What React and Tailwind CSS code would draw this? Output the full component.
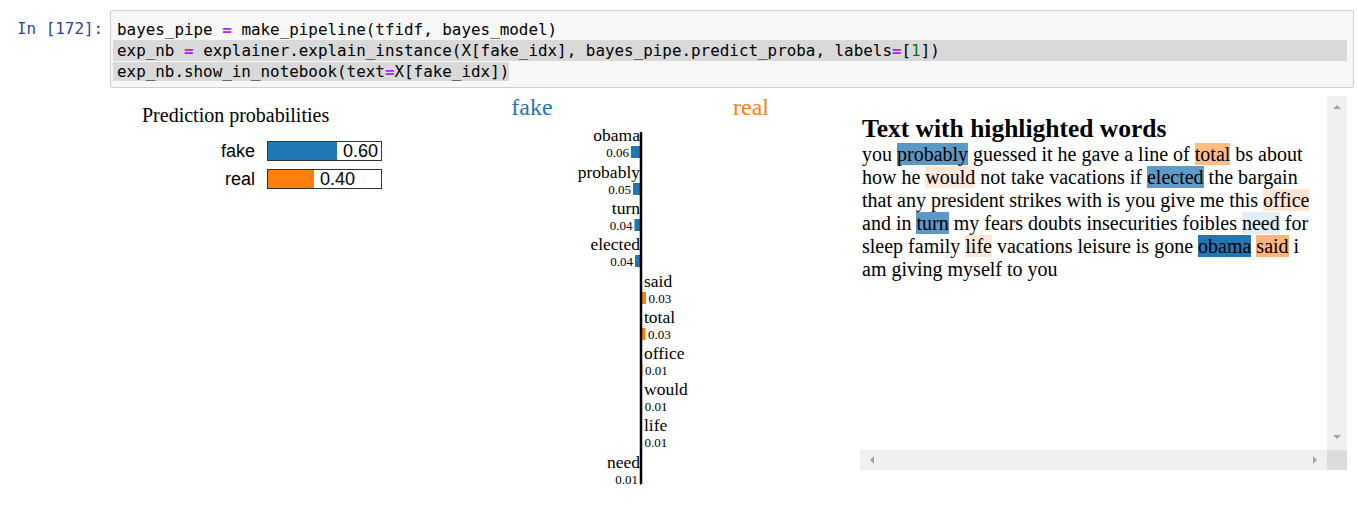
import React from 'react';

const mono = "font-['DejaVu_Sans_Mono','Liberation_Mono',monospace]";

function Op({ children }) {
  return <span className="text-[#aa22ff] font-bold">{children}</span>;
}

function Num({ children }) {
  return <span className="text-[#008000]">{children}</span>;
}

const features = [
  { name: 'obama', value: '0.06', w: 10, side: 'fake', y: 47 },
  { name: 'probably', value: '0.05', w: 8, side: 'fake', y: 84 },
  { name: 'turn', value: '0.04', w: 6.5, side: 'fake', y: 120 },
  { name: 'elected', value: '0.04', w: 6, side: 'fake', y: 156 },
  { name: 'said', value: '0.03', w: 5, side: 'real', y: 193 },
  { name: 'total', value: '0.03', w: 4.5, side: 'real', y: 229 },
  { name: 'office', value: '0.01', w: 1.5, side: 'real', y: 265 },
  { name: 'would', value: '0.01', w: 1.2, side: 'real', y: 301 },
  { name: 'life', value: '0.01', w: 1, side: 'real', y: 337 },
  { name: 'need', value: '0.01', w: 1, side: 'fake', y: 374 },
];

const words = [
  ['you'], ['probably', '#5c98c6'], ['guessed'], ['it'], ['he'], ['gave'], ['a'], ['line'], ['of'],
  ['total', '#ffbc83'], ['bs'], ['about'], ['how'], ['he'], ['would', '#fde7d8'], ['not'], ['take'],
  ['vacations'], ['if'], ['elected', '#5f9bc7'], ['the'], ['bargain'], ['that'], ['any'], ['president'],
  ['strikes'], ['with'], ['is'], ['you'], ['give'], ['me'], ['this'], ['office', '#fee6d6'], ['and'],
  ['in'], ['turn', '#5c98c6'], ['my'], ['fears'], ['doubts'], ['insecurities'], ['foibles'],
  ['need', '#e3edf5'], ['for'], ['sleep'], ['family'], ['life', '#fde7d8'], ['vacations'], ['leisure'],
  ['is'], ['gone'], ['obama', '#2177b4'], ['said', '#ffb57a'], ['i'], ['am'], ['giving'], ['myself'],
  ['to'], ['you'],
];

function ProbaChart() {
  return (
    <svg width="370" height="120" className="font-['Liberation_Serif',serif] mt-[8px]">
      <text x="32" y="26" fontSize="20" fill="#000">Prediction probabilities</text>
      <g fontFamily="'Liberation Sans', Arial, sans-serif" fontSize="18" fill="#000">
        <text x="145" y="61" textAnchor="end">fake</text>
        <rect x="157.5" y="45.5" width="114" height="19" fill="#fff" stroke="#333" />
        <rect x="158" y="46" width="69" height="18" fill="#1f77b4" />
        <text x="233" y="61">0.60</text>
        <text x="145" y="89" textAnchor="end">real</text>
        <rect x="157.5" y="73.5" width="114" height="19" fill="#fff" stroke="#333" />
        <rect x="158" y="74" width="46" height="18" fill="#ff7f0e" />
        <text x="210" y="89">0.40</text>
      </g>
    </svg>
  );
}

function FeatureChart() {
  return (
    <svg width="380" height="404" fontFamily="'Liberation Serif', 'Times New Roman', serif">
      <text x="52" y="27" fontSize="24" textAnchor="middle" fill="#1f77b4">fake</text>
      <text x="271" y="27" fontSize="24" textAnchor="middle" fill="#ff7f0e">real</text>
      {features.map((f) => {
        const left = f.side === 'fake';
        const vy = f.y + 17;
        return (
          <g key={f.name}>
            <text x={left ? 160 : 164} y={f.y + 6} fontSize="17.5" textAnchor={left ? 'end' : 'start'} fill="#000">
              {f.name}
            </text>
            <rect
              x={left ? 161 - f.w : 161}
              y={vy - 6}
              width={f.w}
              height="12"
              fill={left ? '#1f77b4' : '#ff7f0e'}
            />
            <text
              x={left ? 160 - f.w - 1 : 162 + f.w + 1.5}
              y={vy + 4.5}
              fontSize="13"
              textAnchor={left ? 'end' : 'start'}
              fill="#000"
            >
              {f.value}
            </text>
          </g>
        );
      })}
      <line x1="161" y1="44" x2="161" y2="396" stroke="#000" strokeWidth="2.5" />
    </svg>
  );
}

function TextPanel() {
  return (
    <div className="w-[487px] h-[374px] flex flex-col mt-[8px]">
      <div className="flex flex-1 min-h-0">
        <div className="flex-1 pl-[2px] pt-[19px] font-['Liberation_Serif','Times_New_Roman',serif] text-black overflow-hidden">
          <h3 className="text-[25.5px] leading-[28px] font-bold">Text with highlighted words</h3>
          <p className="text-[20px] leading-[23px]">
            {words.map(([w, c], i) => (
              <React.Fragment key={i}>
                {c ? <span style={{ backgroundColor: c }}>{w}</span> : w}
                {i < words.length - 1 ? ' ' : ''}
              </React.Fragment>
            ))}
          </p>
        </div>
        <div className="w-[20px] bg-[#f0f0f0] flex flex-col justify-between items-center pt-[9px] pb-[11px]">
          <div className="w-0 h-0 border-x-[4px] border-x-transparent border-b-[4px] border-b-[#a3a3a3]" />
          <div className="w-0 h-0 border-x-[4px] border-x-transparent border-t-[4px] border-t-[#a3a3a3]" />
        </div>
      </div>
      <div className="h-[20px] flex">
        <div className="flex-1 bg-[#f0f0f0] flex items-center justify-between pl-[10px] pr-[10px]">
          <div className="w-0 h-0 border-y-[4px] border-y-transparent border-r-[4px] border-r-[#a3a3a3]" />
          <div className="w-0 h-0 border-y-[4px] border-y-transparent border-l-[4px] border-l-[#a3a3a3]" />
        </div>
        <div className="w-[20px] bg-[#dcdcdc]" />
      </div>
    </div>
  );
}

export default function App() {
  return (
    <div className="w-[1358px] h-[522px] bg-white overflow-hidden">
      <div className="flex pt-[10px]">
        <div className={`w-[110px] pl-[17px] pt-[8px] ${mono} text-[15.9px] leading-[21px] text-[#303f9f] whitespace-pre`}>
          In [172]:
        </div>
        <div className={`w-[1244px] h-[78px] border border-[#cfcfcf] rounded-[2px] bg-[#f7f7f7] pt-[8px] ${mono} text-[15.9px] leading-[21px] text-black whitespace-pre`}>
          <div className="pl-[6px]">
            bayes_pipe <Op>=</Op> make_pipeline(tfidf, bayes_model)
          </div>
          <div className="ml-[2px] mr-[6px] pl-[4px] bg-[#d9d9d9]">
            exp_nb <Op>=</Op> explainer.explain_instance(X[fake_idx], bayes_pipe.predict_proba, labels<Op>=</Op>[<Num>1</Num>])
          </div>
          <div className="pl-[2px]">
            <span className="pl-[4px] bg-[#d9d9d9]">
              exp_nb.show_in_notebook(text<Op>=</Op>X[fake_idx])
            </span>
          </div>
        </div>
      </div>
      <div className="flex items-start">
        <div className="w-[110px]" />
        <ProbaChart />
        <FeatureChart />
        <TextPanel />
      </div>
    </div>
  );
}
